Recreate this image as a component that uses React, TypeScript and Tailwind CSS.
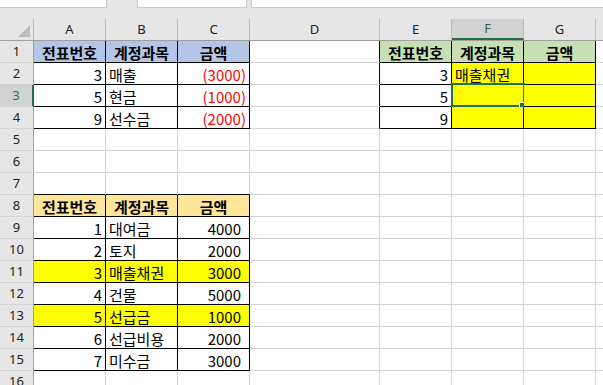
import React from 'react';

type Cell = { v?: string; align?: 'l' | 'r' | 'c'; bold?: boolean; bg?: string; red?: boolean; pad?: boolean };

const COLS = ['A', 'B', 'C', 'D', 'E', 'F', 'G'];
const colW = ['w-[72px]', 'w-[72px]', 'w-[72px]', 'w-[130px]', 'w-[72px]', 'w-[72px]', 'w-[72px]'];

const BLUE = 'bg-[#b4c6e7]';
const GREEN = 'bg-[#c6e0b4]';
const ORANGE = 'bg-[#ffe699]';
const YELLOW = 'bg-[#ffff00]';

// [row][col] where col 0 = A
const data: Record<number, Record<number, Cell>> = {
  1: {
    0: { v: '전표번호', align: 'c', bold: true, bg: BLUE },
    1: { v: '계정과목', align: 'c', bold: true, bg: BLUE },
    2: { v: '금액', align: 'c', bold: true, bg: BLUE },
    4: { v: '전표번호', align: 'c', bold: true, bg: GREEN },
    5: { v: '계정과목', align: 'c', bold: true, bg: GREEN },
    6: { v: '금액', align: 'c', bold: true, bg: GREEN },
  },
  2: {
    0: { v: '3', align: 'r' }, 1: { v: '매출' }, 2: { v: '(3000)', align: 'r', red: true },
    4: { v: '3', align: 'r' }, 5: { v: '매출채권', bg: YELLOW }, 6: { bg: YELLOW },
  },
  3: {
    0: { v: '5', align: 'r' }, 1: { v: '현금' }, 2: { v: '(1000)', align: 'r', red: true },
    4: { v: '5', align: 'r' }, 5: { bg: YELLOW }, 6: { bg: YELLOW },
  },
  4: {
    0: { v: '9', align: 'r' }, 1: { v: '선수금' }, 2: { v: '(2000)', align: 'r', red: true },
    4: { v: '9', align: 'r' }, 5: { bg: YELLOW }, 6: { bg: YELLOW },
  },
  8: {
    0: { v: '전표번호', align: 'c', bold: true, bg: ORANGE },
    1: { v: '계정과목', align: 'c', bold: true, bg: ORANGE },
    2: { v: '금액', align: 'c', bold: true, bg: ORANGE },
  },
};

const lower: [string, string, string, boolean][] = [
  ['1', '대여금', '4000', false],
  ['2', '토지', '2000', false],
  ['3', '매출채권', '3000', true],
  ['4', '건물', '5000', false],
  ['5', '선급금', '1000', true],
  ['6', '선급비용', '2000', false],
  ['7', '미수금', '3000', false],
];
lower.forEach(([n, name, amt, hi], i) => {
  const bg = hi ? YELLOW : undefined;
  data[9 + i] = {
    0: { v: n, align: 'r', bg },
    1: { v: name, bg },
    2: { v: amt, align: 'r', bg, pad: true },
  };
});

function inTable(r: number, c: number) {
  if (r >= 1 && r <= 4 && c >= 0 && c <= 2) return true;
  if (r >= 8 && r <= 15 && c >= 0 && c <= 2) return true;
  if (r >= 1 && r <= 4 && c >= 4 && c <= 6) return true;
  return false;
}

function DataCell({ r, c }: { r: number; c: number }) {
  const cell = data[r]?.[c] ?? {};
  const rightBlack = inTable(r, c) || inTable(r, c + 1);
  const bottomBlack = inTable(r, c) || inTable(r + 1, c);
  const selected = r === 3 && c === 5;
  const align = cell.align === 'r' ? 'justify-end' : cell.align === 'c' ? 'justify-center' : 'justify-start';
  return (
    <div
      className={`relative h-[22px] shrink-0 flex items-center border-r border-b whitespace-nowrap ${colW[c]} ${align} ${
        rightBlack ? 'border-r-black' : 'border-r-[#d4d4d4]'
      } ${bottomBlack ? 'border-b-black' : 'border-b-[#d4d4d4]'} ${cell.bg ?? 'bg-white'} ${
        cell.pad ? 'pr-[8px]' : 'px-[3px]'
      } ${cell.bold ? 'font-bold' : ''} ${cell.red ? 'text-[#ff0000]' : 'text-black'}`}
    >
      {cell.v && <span className="leading-[21px] pt-[1px]">{cell.v}</span>}
      {selected && (
        <>
          <div className="absolute left-[-1px] top-[-2px] w-[74px] h-[24px] border-2 border-[#217346]" />
          <div className="absolute left-[67px] top-[17px] w-[8px] h-[8px] bg-white flex items-center justify-center">
            <div className="w-[6px] h-[6px] bg-[#217346]" />
          </div>
        </>
      )}
    </div>
  );
}

export default function App() {
  const rows = Array.from({ length: 16 }, (_, i) => i + 1);
  return (
    <div
      className="w-[603px] h-[385px] overflow-hidden bg-white text-[15px]"
      style={{ fontFamily: '"Noto Sans CJK KR", "Noto Sans", sans-serif' }}
    >
      {/* formula bar strip */}
      <div className="h-[19px] bg-[#e6e6e6] flex items-start">
        <div className="w-[107px] h-[8px] bg-white border-r border-b border-[#c8c8c8]" />
        <div className="w-[30px]" />
        <div className="w-[110px] h-[8px] bg-white border-l border-r border-b border-[#c8c8c8]" />
        <div className="w-[4px]" />
        <div className="flex-1 h-[8px] bg-white border-l border-b border-[#c8c8c8]" />
      </div>

      {/* column headers */}
      <div className="flex h-[22px] bg-[#e6e6e6] border-b border-[#9f9f9f] text-[13px] text-[#222]" style={{ fontFamily: '"Noto Sans", sans-serif' }}>
        <div className="w-[34px] shrink-0 border-r border-[#bcbcbc] relative">
          <svg className="absolute right-[3px] bottom-[3px]" width="12" height="12" viewBox="0 0 12 12">
            <polygon points="12,0 12,12 0,12" fill="#bdbdbd" />
          </svg>
        </div>
        {COLS.map((col, i) => (
          <div
            key={col}
            className={`${colW[i]} shrink-0 flex items-center justify-center border-r border-[#bcbcbc] ${
              col === 'F' ? 'bg-[#d2d2d2] border-b-2 border-b-[#217346] text-[#3d5c45]' : ''
            }`}
          >
            {col}
          </div>
        ))}
        <div className="flex-1" />
      </div>

      {/* rows */}
      {rows.map((r) => (
        <div key={r} className="flex">
          <div
            className={`w-[34px] h-[22px] shrink-0 flex items-center justify-center text-[13px] border-b border-b-[#d4d4d4] ${
              r === 3 ? 'bg-[#d2d2d2] text-[#217346] border-r-2 border-r-[#217346]' : 'bg-[#e6e6e6] text-[#222] border-r border-r-[#9f9f9f]'
            }`}
            style={{ fontFamily: '"Noto Sans", sans-serif' }}
          >
            {r}
          </div>
          {COLS.map((_, c) => (
            <DataCell key={c} r={r} c={c} />
          ))}
          <div className="flex-1 h-[22px] border-b border-[#d4d4d4]" />
        </div>
      ))}
    </div>
  );
}
